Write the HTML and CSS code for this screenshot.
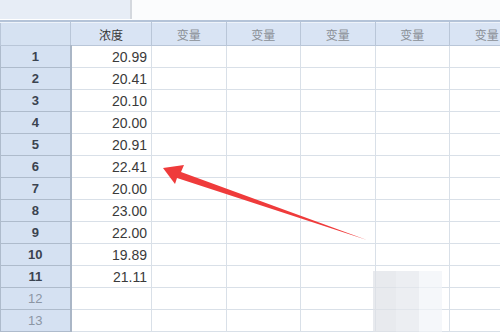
FILE: index.html
```html
<!DOCTYPE html>
<html lang="zh-CN">
<head>
<meta charset="UTF-8">
<title>数据视图</title>
<link rel="stylesheet" href="styles.css">
</head>
<body>

<div class="sheet">
  <!-- cell editor strip -->
  <div class="topbar">
    <div class="cell-box"></div>
    <div class="cell-value"></div>
  </div>

  <table class="grid">
    <colgroup>
      <col class="c-num">
      <col class="c-first">
      <col class="c-var">
      <col class="c-var">
      <col class="c-var">
      <col class="c-var">
      <col class="c-var">
    </colgroup>
    <thead>
      <tr>
        <th class="corner"></th>
        <th>浓度</th>
        <th class="muted">变量</th>
        <th class="muted">变量</th>
        <th class="muted">变量</th>
        <th class="muted">变量</th>
        <th class="muted">变量</th>
      </tr>
    </thead>
    <tbody>
      <tr><th>1</th><td class="val">20.99</td><td></td><td></td><td></td><td></td><td></td></tr>
      <tr><th>2</th><td class="val">20.41</td><td></td><td></td><td></td><td></td><td></td></tr>
      <tr><th>3</th><td class="val">20.10</td><td></td><td></td><td></td><td></td><td></td></tr>
      <tr><th>4</th><td class="val">20.00</td><td></td><td></td><td></td><td></td><td></td></tr>
      <tr><th>5</th><td class="val">20.91</td><td></td><td></td><td></td><td></td><td></td></tr>
      <tr><th>6</th><td class="val">22.41</td><td></td><td></td><td></td><td></td><td></td></tr>
      <tr><th>7</th><td class="val">20.00</td><td></td><td></td><td></td><td></td><td></td></tr>
      <tr><th>8</th><td class="val">23.00</td><td></td><td></td><td></td><td></td><td></td></tr>
      <tr><th>9</th><td class="val">22.00</td><td></td><td></td><td></td><td></td><td></td></tr>
      <tr><th>10</th><td class="val">19.89</td><td></td><td></td><td></td><td></td><td></td></tr>
      <tr><th>11</th><td class="val">21.11</td><td></td><td></td><td></td><td></td><td></td></tr>
      <tr class="empty"><th>12</th><td></td><td></td><td></td><td></td><td></td><td></td></tr>
      <tr class="empty"><th>13</th><td></td><td></td><td></td><td></td><td></td><td></td></tr>
    </tbody>
  </table>

  <!-- blurred watermark patch -->
  <div class="mosaic">
    <span class="m1"></span><span class="m2"></span><span class="m3"></span>
  </div>

  <!-- red pointer arrow -->
  <svg class="arrow" viewBox="0 0 500 332" width="500" height="332">
    <polygon points="163,168 184,165 181,172 367,240 177,178 175,184" fill="#ef3b3b" />
  </svg>
</div>

</body>
</html>
```

FILE: styles.css
```css
html, body {
  margin: 0;
  padding: 0;
  background: #ffffff;
}

.sheet {
  position: relative;
  width: 500px;
  height: 332px;
  overflow: hidden;
  font-family: "Liberation Sans", Arial, "Noto Sans CJK SC", sans-serif;
}

.topbar {
  display: flex;
  height: 22px;
  border-bottom: 2px solid #b4c3d8;
  box-sizing: border-box;
}
.cell-box {
  width: 130px;
  height: 19px;
  background: #e7edf6;
  border-right: 2px solid #d4d8de;
}
.cell-value {
  flex: 1;
  background: #fbfcfd;
}

.grid {
  border-collapse: collapse;
  table-layout: fixed;
  width: 524px;
}
.c-num { width: 70px; }
.c-first { width: 81px; }
.c-var { width: 74.5px; }

.grid th,
.grid td {
  height: 22px;
  padding: 0 3px;
  box-sizing: border-box;
  border: 1px solid #d9e0e8;
  font-size: 14px;
}

.grid thead th {
  height: 23px;
  background: #d9e4f4;
  border: 1px solid #b9c6d8;
  border-top: 1px solid #eef3fa;
  font-family: "Noto Sans CJK SC", sans-serif;
  font-weight: normal;
  font-size: 12px;
  color: #3a3a3a;
  text-align: center;
}
.grid thead th.muted {
  color: #8a8f96;
}
.grid thead th.corner {
  background: #d6e2f2;
}

.grid tbody th {
  background: #d5e1f2;
  border: 1px solid #aebbcc;
  border-top-color: #eef3fb;
  border-right: 2px solid #aab6c6;
  font-size: 13px;
  font-weight: bold;
  color: #3b4350;
  text-align: center;
}
.grid tbody tr.empty th {
  font-weight: normal;
  color: #8c96a4;
}

.grid td {
  background: #ffffff;
  color: #3a3a3a;
}
.grid td.val {
  text-align: right;
  padding-right: 4px;
}

.mosaic {
  position: absolute;
  left: 373px;
  top: 271px;
  display: flex;
  height: 61px;
  opacity: 0.7;
}
.mosaic span {
  width: 23px;
  height: 100%;
}
.mosaic .m1 { background: #dfe2e7; }
.mosaic .m2 { background: #e5e8ed; }
.mosaic .m3 { background: #f2f4f8; }

.arrow {
  position: absolute;
  left: 0;
  top: 0;
}
```
